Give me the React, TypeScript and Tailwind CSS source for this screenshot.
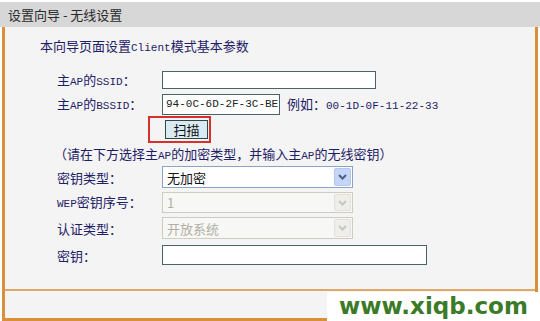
import React from "react";

const cjk = { fontFamily: '"Noto Sans CJK SC", "Noto Sans", sans-serif' };
const mono = { fontFamily: '"Liberation Mono", "DejaVu Sans Mono", monospace' };

function L({ children }: { children: React.ReactNode }) {
  return <span className="text-[11px]" style={mono}>{children}</span>;
}

function Label({ children }: { children: React.ReactNode }) {
  return (
    <div className="w-[157px] shrink-0 pl-[52px] text-[13px] leading-none text-[#1e2066] whitespace-nowrap">
      {children}
    </div>
  );
}

function Chevron({ color }: { color: string }) {
  return (
    <svg width="9" height="6" viewBox="0 0 9 6">
      <path d="M1 1 L4.5 4.5 L8 1" fill="none" stroke={color} strokeWidth="2" />
    </svg>
  );
}

function Select({ text, disabled, h }: { text: string; disabled?: boolean; h: number }) {
  return (
    <div
      className={`flex w-[191px] items-center border p-[1px] ${
        disabled ? "border-[#cfcdc0] bg-[#f7f7f5]" : "border-[#8aa4c6] bg-white"
      }`}
      style={{ height: h }}
    >
      <div
        className={`flex-1 pl-[3px] text-[13px] leading-none ${disabled ? "text-[#b2b0a6]" : "text-[#111]"}`}
      >
        {text}
      </div>
      <div
        className={`flex h-full w-[17px] items-center justify-center rounded-[2px] ${
          disabled ? "bg-[#eeeeea] border border-[#e2e0d8]" : "bg-[#c5d5f8] border border-[#b3c6ef]"
        }`}
      >
        <Chevron color={disabled ? "#c9c7bd" : "#4d6185"} />
      </div>
    </div>
  );
}

export default function App() {
  return (
    <div className="relative flex h-[321px] w-[540px] flex-col overflow-hidden bg-white px-[2px]" style={cjk}>
      <div className="mt-[2px] flex h-[25px] items-center bg-[#d7d7d7] pl-[8px] text-[13px] text-[#2a2a2a] -mx-[2px]">
        设置向导 - 无线设置
      </div>
      <div className="flex flex-1 flex-col border-x-[3px] border-b-[3px] border-[#d9903a] bg-[#f4f4f4]">
        <div className="flex h-[262px] flex-col">
          <div className="mt-[11px] h-[16px] pl-[35px] text-[13px] leading-[16px] text-[#1e2066]">
            本向导页面设置<L>Client</L>模式基本参数
          </div>
          <div className="mt-[16px] flex h-[20px] items-center">
            <Label>
              主<L>AP</L>的<L>SSID</L>：
            </Label>
            <div className="h-[18px] w-[214px] border border-[#4a6464] bg-white" />
          </div>
          <div className="mt-[3px] flex h-[23px] items-center">
            <Label>
              主<L>AP</L>的<L>BSSID</L>：
            </Label>
            <div className="flex h-[21px] w-[118px] items-center border border-[#4a6464] bg-white pl-[3px] text-[#222]">
              <L>94-0C-6D-2F-3C-BE</L>
            </div>
            <div className="ml-[7px] text-[13px] text-[#1e2066] whitespace-nowrap">
              例如：<L>00-1D-0F-11-22-33</L>
            </div>
          </div>
          <div className="flex h-[27px]">
            <div className="ml-[143px] h-[27px] w-[63px] border-2 border-[#d9302e] pl-[15px] pt-[2px]">
              <div className="flex h-[19px] w-[43px] items-center justify-center border border-[#2d4848] bg-[#dbeaf2] text-[13px] leading-none text-[#111]">
                扫描
              </div>
            </div>
          </div>
          <div className="mt-[3px] h-[16px] pl-[49px] text-[13px] leading-[16px] text-[#1e2066] whitespace-nowrap">
            （请在下方选择主<L>AP</L>的加密类型，并输入主<L>AP</L>的无线密钥）
          </div>
          <div className="mt-[4px] flex h-[22px] items-center">
            <Label>密钥类型：</Label>
            <Select text="无加密" h={22} />
          </div>
          <div className="mt-[4px] flex h-[21px] items-center">
            <Label>
              <L>WEP</L>密钥序号：
            </Label>
            <Select text="1" disabled h={21} />
          </div>
          <div className="mt-[4px] flex h-[22px] items-center">
            <Label>认证类型：</Label>
            <Select text="开放系统" disabled h={22} />
          </div>
          <div className="mt-[6px] flex h-[20px] items-center">
            <Label>密钥：</Label>
            <div className="h-[20px] w-[265px] border border-[#4a6464] bg-white" />
          </div>
        </div>
        <div className="h-[2px] bg-[#e2a867]" />
        <div className="flex flex-1 items-start justify-end gap-[12px] pr-[22px] pt-[3px]">
          <div className="flex h-[20px] w-[54px] items-center justify-center border border-[#6a8a9a] bg-[#dbe8f2] text-[13px] text-[#111]">
            上一步
          </div>
          <div className="flex h-[20px] w-[54px] items-center justify-center border border-[#6a8a9a] bg-[#dbe8f2] text-[13px] text-[#111]">
            下一步
          </div>
        </div>
      </div>
      <div
        className="absolute bottom-0 right-0 flex h-[29px] w-[213px] items-center justify-center bg-white text-[23px] font-bold leading-none text-[#3b7a26]"
        style={{ fontFamily: '"DejaVu Sans", Verdana, sans-serif' }}
      >
        www.xiqb.com
      </div>
    </div>
  );
}
